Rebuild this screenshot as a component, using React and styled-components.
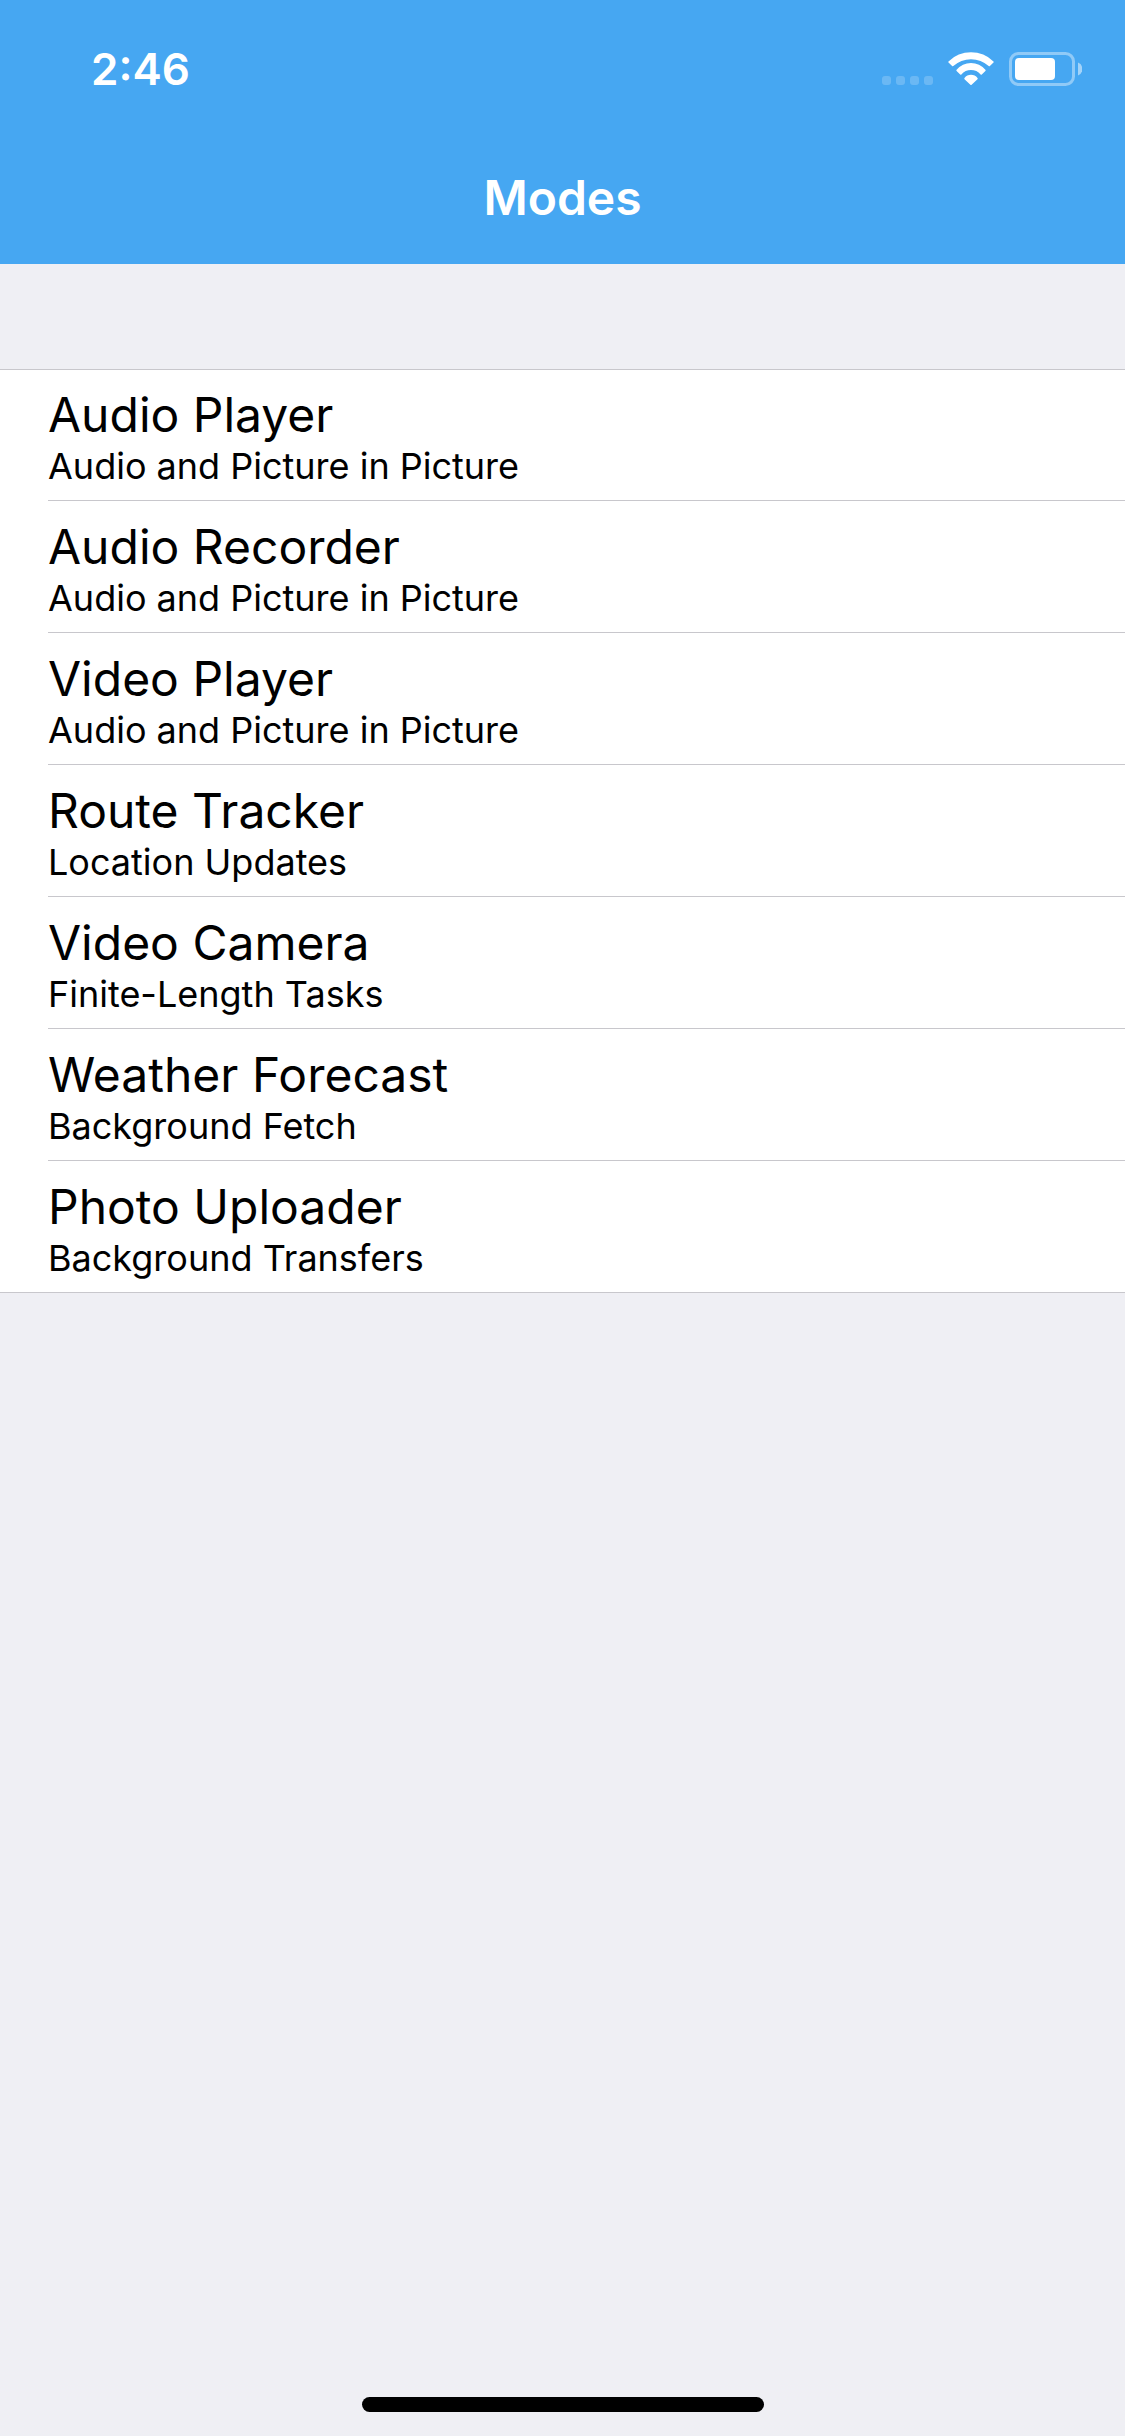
import React from "react";
import styled, { createGlobalStyle } from "styled-components";

const GlobalStyle = createGlobalStyle`
  *, *::before, *::after {
    box-sizing: border-box;
  }
  body {
    margin: 0;
    background: #efeff4;
    color: #000;
    font-family: Inter, "Liberation Sans", sans-serif;
  }
`;

const Screen = styled.div`
  display: flex;
  flex-direction: column;
  min-height: 100vh;
`;

const TopBar = styled.header`
  background: #46a7f2;
  color: #fff;
`;

const StatusBar = styled.div`
  display: flex;
  align-items: center;
  justify-content: space-between;
  height: 132px;
  padding: 6px 43px 0 91px;
`;

const Time = styled.time`
  font-size: 44px;
  font-weight: 600;
  line-height: 54px;
`;

const StatusIcons = styled.div`
  display: flex;
  align-items: flex-end;
  gap: 15px;
`;

const Icon = styled.svg`
  display: block;
  fill: #fff;
`;

const NavBar = styled.div`
  display: flex;
  align-items: center;
  justify-content: center;
  height: 132px;
`;

const NavTitle = styled.h1`
  margin: 0;
  font-size: 48px;
  font-weight: 600;
  line-height: 60px;
`;

const Content = styled.main`
  flex: 1;
  padding-top: 105px;
`;

const ModeList = styled.ul`
  margin: 0;
  padding: 0;
  list-style: none;
  background: #fff;
`;

const ModeItem = styled.li`
  height: 132px;
  padding-left: 48px;

  &:first-child {
    border-top: 1px solid #c8c7cc;
  }
  &:last-child {
    padding-left: 0;
  }
`;

const ModeLink = styled.a`
  display: flex;
  flex-direction: column;
  justify-content: flex-end;
  height: 100%;
  padding-bottom: 13px;
  border-bottom: 1px solid #c8c7cc;
  color: inherit;
  text-decoration: none;

  ${ModeItem}:last-child & {
    padding-left: 48px;
  }
`;

const ModeName = styled.span`
  font-size: 48px;
  line-height: 60px;
`;

const ModeDetail = styled.span`
  font-size: 36px;
  line-height: 42px;
`;

const HomeArea = styled.footer`
  display: flex;
  justify-content: center;
  padding-bottom: 24px;
`;

const HomeIndicator = styled.div`
  width: 402px;
  height: 15px;
  border-radius: 8px;
  background: #000;
`;

const MODES = [
  { name: "Audio Player", detail: "Audio and Picture in Picture" },
  { name: "Audio Recorder", detail: "Audio and Picture in Picture" },
  { name: "Video Player", detail: "Audio and Picture in Picture" },
  { name: "Route Tracker", detail: "Location Updates" },
  { name: "Video Camera", detail: "Finite-Length Tasks" },
  { name: "Weather Forecast", detail: "Background Fetch" },
  { name: "Photo Uploader", detail: "Background Transfers" },
];

function SignalIcon() {
  return (
    <Icon width="51" height="10" viewBox="0 0 51 10" aria-hidden="true">
      {[0, 14, 28, 42].map((x) => (
        <rect key={x} x={x} y="0" width="9" height="9" rx="3" opacity="0.2" />
      ))}
    </Icon>
  );
}

function WifiIcon() {
  return (
    <Icon width="46" height="34" viewBox="0 0 46 34" aria-hidden="true">
      <path d="M.5 9.4A32 32 0 0 1 45.5 9.4Q46 10 45.5 10.6L41.9 14.1Q41.3 14.6 40.7 14.1A26 26 0 0 0 5.3 14.1Q4.7 14.6 4.1 14.1L.5 10.6Q0 10 .5 9.4Z" />
      <path d="M8.6 17.8A18.5 18.5 0 0 1 37.4 17.8Q37.9 18.4 37.4 19L33.8 22.4Q33.2 22.9 32.6 22.4A12.6 12.6 0 0 0 13.4 22.4Q12.8 22.9 12.2 22.4L8.6 19Q8.1 18.4 8.6 17.8Z" />
      <path d="M16.5 26A8 8 0 0 1 29.5 26Q30 26.6 29.5 27.2L23.6 32.7Q23 33.2 22.4 32.7L16.5 27.2Q16 26.6 16.5 26Z" />
    </Icon>
  );
}

function BatteryIcon() {
  return (
    <Icon width="73" height="34" viewBox="0 0 73 34" aria-hidden="true">
      <rect x="1.5" y="1.5" width="63" height="31" rx="8" fill="none" stroke="#fff" strokeWidth="3" opacity="0.4" />
      <path d="M69 10.5A7 7 0 0 1 69 23.5Z" opacity="0.5" />
      <rect x="6" y="6" width="40" height="22" rx="4" />
    </Icon>
  );
}

export default function App() {
  return (
    <>
      <GlobalStyle />
      <Screen>
        <TopBar>
          <StatusBar>
            <Time>2:46</Time>
            <StatusIcons>
              <SignalIcon />
              <WifiIcon />
              <BatteryIcon />
            </StatusIcons>
          </StatusBar>
          <NavBar>
            <NavTitle>Modes</NavTitle>
          </NavBar>
        </TopBar>
        <Content>
          <ModeList>
            {MODES.map((mode) => (
              <ModeItem key={mode.name}>
                <ModeLink href="#">
                  <ModeName>{mode.name}</ModeName>
                  <ModeDetail>{mode.detail}</ModeDetail>
                </ModeLink>
              </ModeItem>
            ))}
          </ModeList>
        </Content>
        <HomeArea>
          <HomeIndicator />
        </HomeArea>
      </Screen>
    </>
  );
}
